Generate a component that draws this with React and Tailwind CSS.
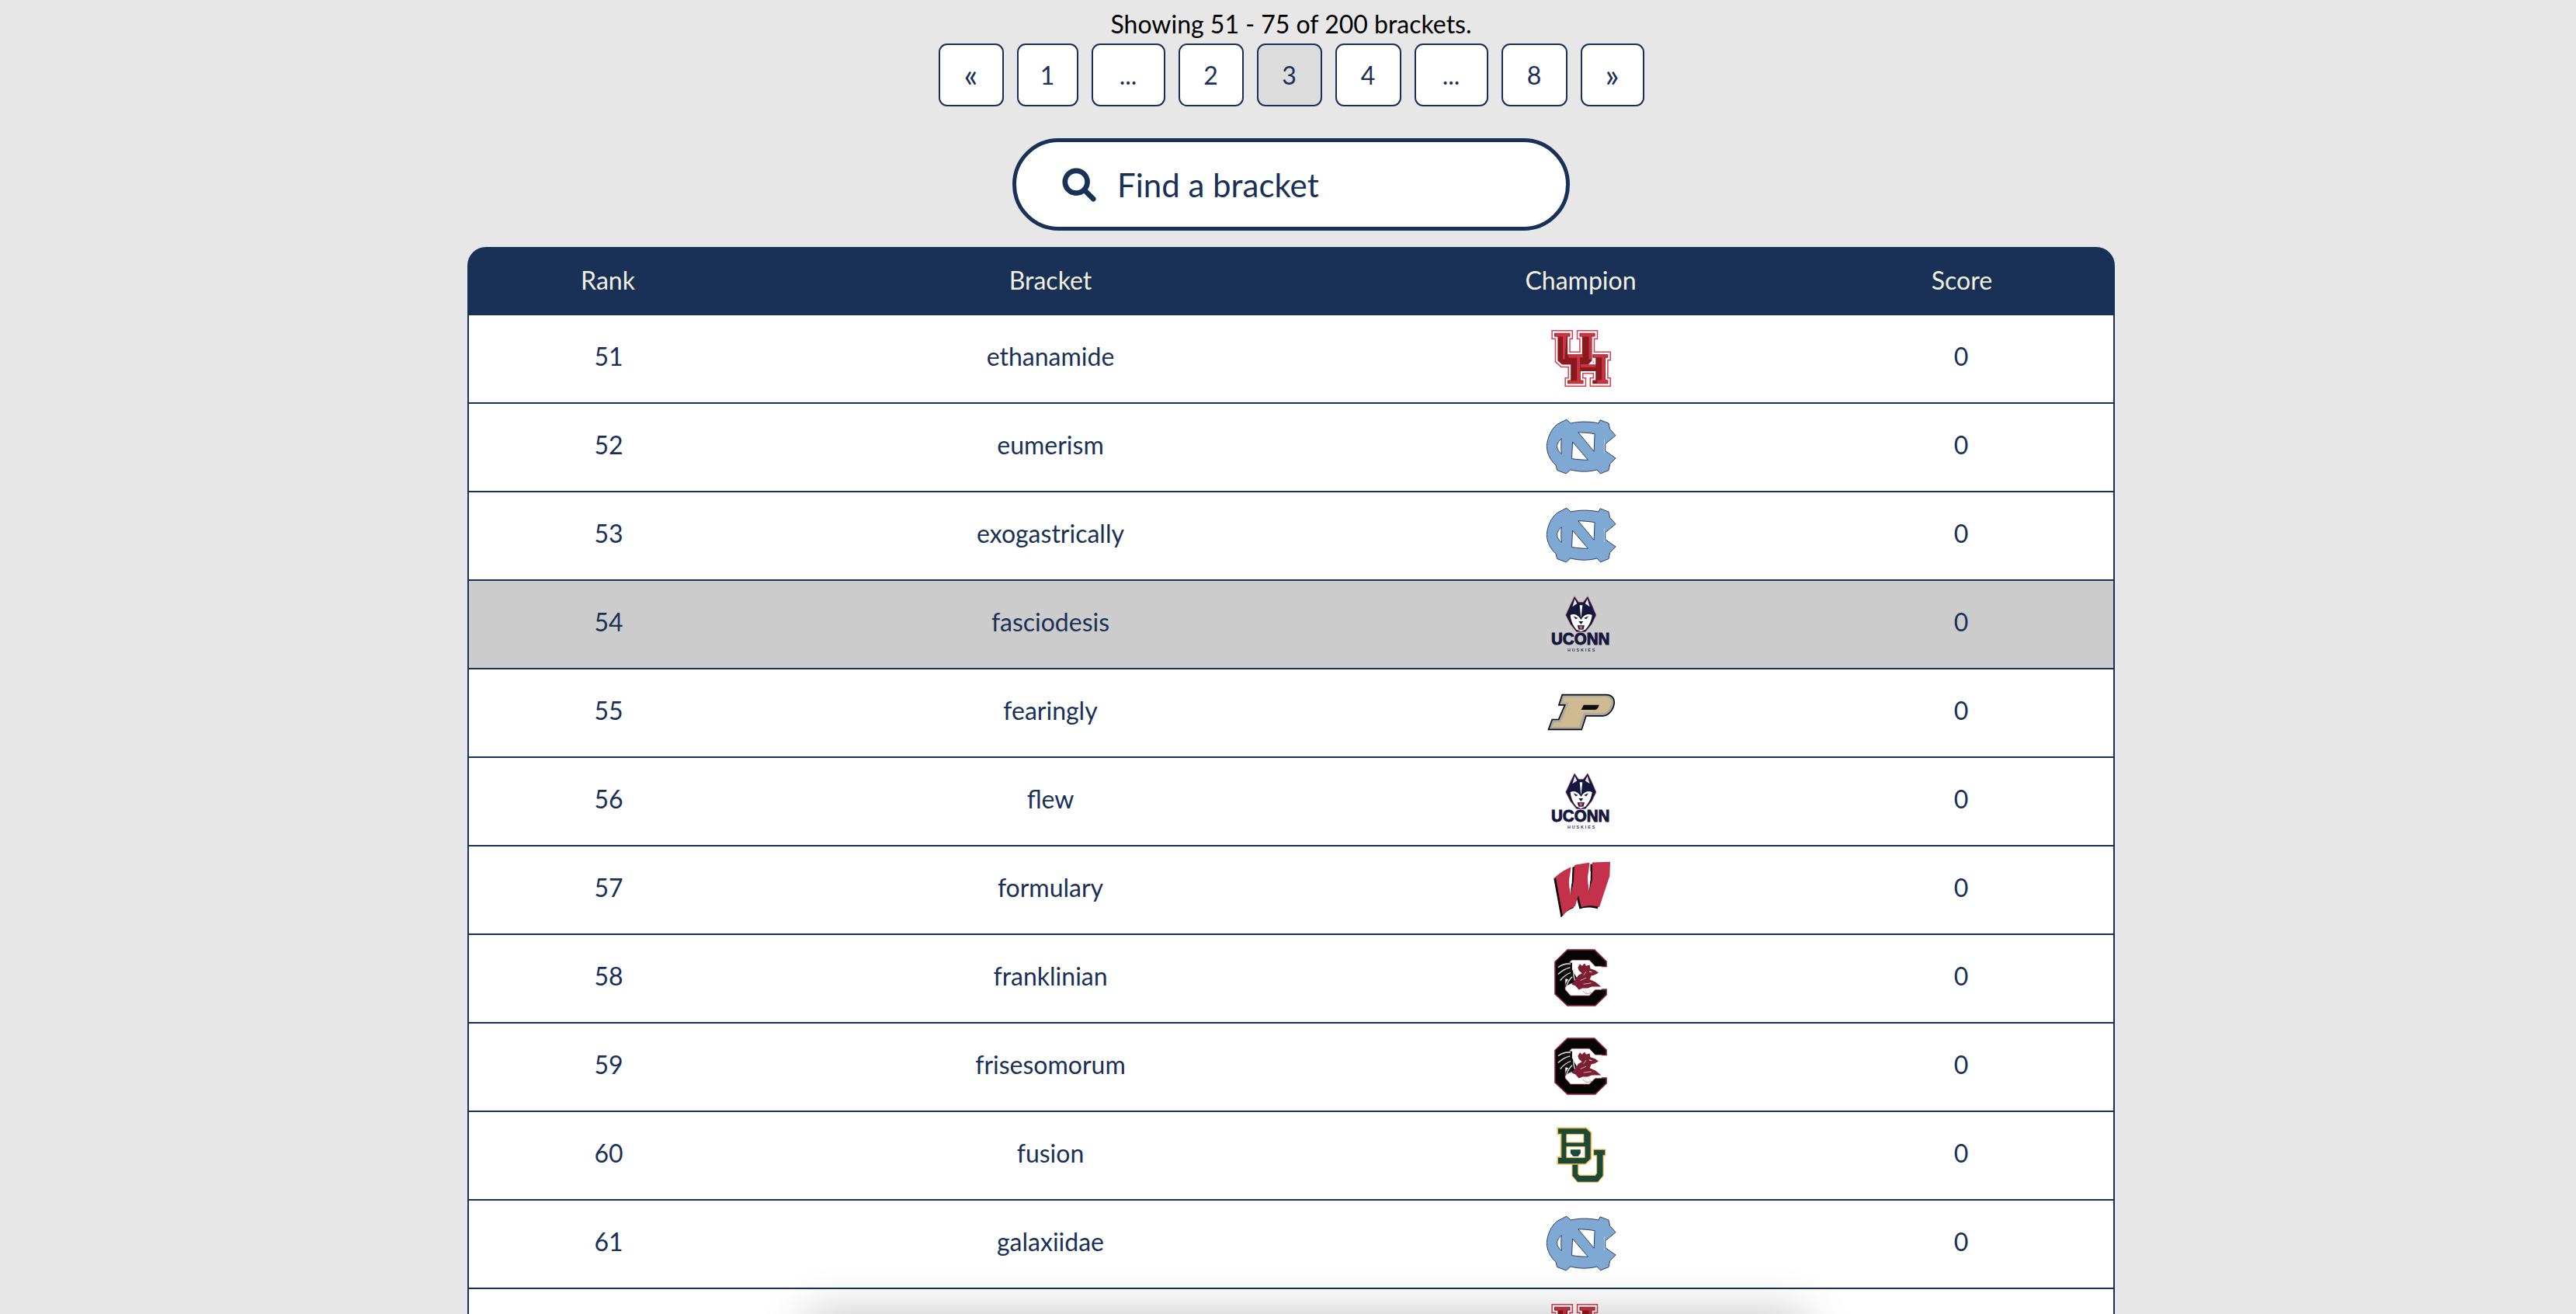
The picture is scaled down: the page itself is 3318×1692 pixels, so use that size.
function UH() {
  const u = "M125 58H186V72H176V150H232V72H222V58H282V72H270V165L255 180H155L138 165V72H125Z";
  const h = "M176 140H237V154H226V180H284V154H272V140H332V154H322V240H332V254H272V240H284V205H226V240H237V254H176V240H188V154H176Z";
  return (
    <svg viewBox="113 47 230 218" className="w-[77px] h-[73px]">
      <path d={u} fill="#d8404f" stroke="#d8404f" strokeWidth="22" strokeLinejoin="miter" />
      <path d={h} fill="#d8404f" stroke="#d8404f" strokeWidth="22" strokeLinejoin="miter" />
      <path d={u} fill="#fff" stroke="#fff" strokeWidth="13" strokeLinejoin="miter" />
      <path d={h} fill="#fff" stroke="#fff" strokeWidth="13" strokeLinejoin="miter" />
      <path d={u} fill="#8a1a1e" />
      <path d={h} fill="#8a1a1e" />
      <path d="M128 60H184V70H172L165 160H158V72H128Z" fill="#cb3443" />
      <path d="M225 60H280V70H268V160H258V72H225Z" fill="#cb3443" />
      <path d="M180 142H235V152H224V250H212V154H180Z" fill="#cb3443" />
      <path d="M275 142H330V152H320V238H330V252H290V240H308V152H275Z" fill="#cb3443" />
      <path d="M226 180H284V190H226Z" fill="#cb3443" />
      <path d="M178 242H235V252H178Z" fill="#cb3443" />
    </svg>
  );
}

function UNC() {
  return (
    <svg viewBox="91 390 274 216" className="w-[91px] h-[72px]">
      <path
        d="M95 497C97 462 112 432 135 412L172 393L187 408C220 400 262 400 296 408L302 395L335 408L340 431L362 455L322 488V515L362 543L340 566L335 590L303 603L290 588C258 597 222 597 187 588L170 603L135 590L130 570C110 552 96 528 95 497Z"
        fill="#7fa9d3"
        stroke="#2e3f63"
        strokeWidth="3"
        strokeLinejoin="round"
      />
      <path d="M152 467C140 478 135 488 135 497C135 508 142 518 152 527C150 506 150 488 152 467Z" fill="#fff" stroke="#2e3f63" strokeWidth="3" />
      <path d="M217 443C240 444 262 445 281 449L278 517Z" fill="#fff" stroke="#2e3f63" strokeWidth="3" strokeLinejoin="round" />
      <path d="M195 480L255 550C235 550 212 548 192 545Z" fill="#fff" stroke="#2e3f63" strokeWidth="3" strokeLinejoin="round" />
      <path d="M318 470V525" stroke="#fff" strokeWidth="2" opacity="0.7" />
    </svg>
  );
}

function UConn() {
  return (
    <svg viewBox="111 22 234 222" className="w-[78px] h-[74px]">
      <path d="M204 27L220 50H238L255 27L271 60L288 100L271 135L246 165H212L188 135L170 100L188 60Z" fill="#15173f" stroke="#d9656f" strokeWidth="2" strokeLinejoin="round" />
      <path d="M205 38L214 56L196 68Z" fill="#e8e6ea" />
      <path d="M254 38L245 56L263 68Z" fill="#e8e6ea" />
      <path d="M188 100C205 92 218 100 229 118C240 100 255 92 272 100C270 122 258 145 246 156L229 163L212 156C200 145 190 122 188 100Z" fill="#fff" />
      <path d="M224 62L229 112L235 62Z" fill="#fff" />
      <path d="M200 104L218 112L208 116Z" fill="#15173f" />
      <path d="M258 104L240 112L250 116Z" fill="#15173f" />
      <path d="M220 124H238L229 136Z" fill="#15173f" />
      <path d="M215 140H243L238 156H220Z" fill="#15173f" />
      <path d="M222 143H236L233 153H225Z" fill="#dc5a6c" />
      <text x="227" y="214" textAnchor="middle" textLength="226" lengthAdjust="spacingAndGlyphs" fontFamily="'Liberation Sans', sans-serif" fontWeight="700" fontSize="64" fill="#15173f" stroke="#15173f" strokeWidth="3">UCONN</text>
      <text x="230" y="240" textAnchor="middle" textLength="106" lengthAdjust="spacing" fontFamily="'Liberation Sans', sans-serif" fontWeight="700" fontSize="16" fill="#2a2c5a">HUSKIES</text>
    </svg>
  );
}

function Purdue() {
  const p = "M158 410H326C346 411 354 424 352 438C349 462 332 482 312 483H244L227 536H108L119 506H144L172 441H148Z";
  return (
    <svg viewBox="91 398 274 150" className="w-[91px] h-[50px]">
      <path d={p} fill="#0d0d0d" stroke="#0d0d0d" strokeWidth="14" strokeLinejoin="miter" />
      <path d={p} fill="#a9a8a2" stroke="#a9a8a2" strokeWidth="4" />
      <path d="M162 414H322C340 415 347 426 345 438C342 458 328 476 310 476H238L220 530H116L124 512H150L180 436H154Z" fill="#cfb991" />
      <path d="M238 445H298C296 455 290 463 282 464H228Z" fill="#0d0d0d" />
    </svg>
  );
}

function Wisconsin() {
  const w = "M130 118C150 100 170 88 190 80L182 140L188 190L200 135L203 73C225 68 245 65 262 63L255 125L260 178L272 125L272 62L342 60L340 115L300 235C275 228 250 228 230 236L218 190L206 232C188 238 172 250 158 270Z";
  return (
    <svg viewBox="113 58 232 216" className="w-[77px] h-[72px]">
      <path d={w} transform="translate(-7 7)" fill="#0b0b0b" />
      <path d={w} fill="#c3314b" />
      <path d="M188 190L182 140L186 105L194 108L192 140Z" fill="#fff" />
      <path d="M260 178L255 125L258 95L266 97L265 125Z" fill="#fff" />
    </svg>
  );
}

function Gamecock() {
  return (
    <svg viewBox="127 399 204 221" className="w-[68px] h-[74px]">
      <path d="M178 402H282L328 447V466H285L262 442H195L170 465V555L190 578H262L285 555H328V575L285 617H178L130 572V448Z" fill="#050505" stroke="#7c1f2e" strokeWidth="5" strokeLinejoin="miter" />
      <path d="M170 465L195 442H262L285 466H310V555H285L262 578H190L170 555Z" fill="#fff" />
      <path d="M196 452C172 448 150 456 136 470C150 468 160 468 170 472C152 476 142 486 136 500C150 492 160 490 170 494C156 504 146 516 146 524C160 514 172 512 182 516C172 526 168 536 170 546C182 534 194 530 204 532L214 510L196 478Z" fill="#111" />
      <path d="M190 456C170 454 154 460 142 470M188 470C172 474 156 482 142 496M190 490C174 496 160 508 150 520M196 506C186 516 178 528 174 542M204 470C200 490 202 510 208 524" stroke="#e9e4e4" strokeWidth="4" fill="none" />
      <path d="M218 470L226 456L234 464L244 454L250 464L264 460L266 474L284 480L298 490L284 498L270 502L264 516L286 526L308 544H272L256 550H236L222 556L208 540L194 536L208 518L220 500L234 492L222 482Z" fill="#7d1f33" />
      <path d="M240 500L250 486M228 520L250 510M240 534L270 530M246 552L252 570M258 552L270 570" stroke="#d9c9cc" strokeWidth="2.5" fill="none" />
      <path d="M262 485L272 488" stroke="#fff" strokeWidth="3" />
      <path d="M236 560L250 572L272 568" stroke="#777" strokeWidth="2" fill="none" />
    </svg>
  );
}

function Baylor() {
  const u = "M195 205V255L215 278H292L312 255V175H320V155H278V175H290V245L283 255H222L215 248V205Z";
  const b = "M137 70H248L267 88V190L245 210H137V183H150V95H137Z";
  return (
    <svg viewBox="131 63 194 222" className="w-[65px] h-[74px]">
      <path d={u} fill="#f2bd55" stroke="#f2bd55" strokeWidth="7" strokeLinejoin="miter" />
      <path d={u} fill="#1c4a36" />
      <path d={b} fill="#1c4a36" stroke="#f2bd55" strokeWidth="5" strokeLinejoin="miter" />
      <path d="M172 95H238V126H172Z" fill="#fff" stroke="#f2bd55" strokeWidth="3" />
      <path d="M172 143H242V185H172Z" fill="#fff" stroke="#f2bd55" strokeWidth="3" />
      <path d="M187 154H226V168L216 180H198L187 168Z" fill="#1c4a36" />
    </svg>
  );
}

const LOGOS = { UH, UNC, UConn, Purdue, Wisconsin, Gamecock, Baylor };

const ROWS = [
  [51, "ethanamide", "UH"],
  [52, "eumerism", "UNC"],
  [53, "exogastrically", "UNC"],
  [54, "fasciodesis", "UConn"],
  [55, "fearingly", "Purdue"],
  [56, "flew", "UConn"],
  [57, "formulary", "Wisconsin"],
  [58, "franklinian", "Gamecock"],
  [59, "frisesomorum", "Gamecock"],
  [60, "fusion", "Baylor"],
  [61, "galaxiidae", "UNC"],
  [62, "", "UH"],
];

const PAGES = [
  ["«", "w-[84px] bg-white text-[42px]"],
  ["1", "w-[79px] bg-white text-[32px]"],
  ["...", "w-[95px] bg-white text-[32px]"],
  ["2", "w-[84px] bg-white text-[32px]"],
  ["3", "w-[84px] bg-[#dcdcdc] text-[32px]"],
  ["4", "w-[85px] bg-white text-[32px]"],
  ["...", "w-[95px] bg-white text-[32px]"],
  ["8", "w-[85px] bg-white text-[32px]"],
  ["»", "w-[82px] bg-white text-[42px]"],
];

export default function App() {
  return (
    <div className="relative h-[1692px] overflow-hidden bg-[#e7e7e7] font-['Lato',sans-serif]">
      <div className="ml-[602px] w-[2122px] flex flex-col items-center">
        <div className="h-[56px] pt-[7px] text-[32px] leading-[48px] text-black">Showing 51 - 75 of 200 brackets.</div>
        <div className="flex gap-[17px]">
          {PAGES.map(([label, cls], i) => (
            <div
              key={i}
              className={`h-[81px] flex items-center justify-center rounded-[11px] border-2 border-[#193157] text-[#193157] ${cls}`}
            >
              {label}
            </div>
          ))}
        </div>
        <div className="mt-[41px] h-[119px] w-[718px] flex items-center rounded-full border-[5px] border-[#193157] bg-white pl-[58px] text-[#193157]">
          <svg viewBox="0 0 48 48" className="w-[46px] h-[48px] shrink-0" fill="none" stroke="#193157">
            <circle cx="20" cy="20" r="15" strokeWidth="7" />
            <path d="M31 31L43 43" strokeWidth="7" strokeLinecap="round" />
          </svg>
          <span className="ml-[26px] text-[42px] leading-none">Find a bracket</span>
        </div>
        <div className="mt-[21px] w-full overflow-hidden rounded-t-[24px]">
          <div className="grid h-[88px] grid-cols-[362px_778px_588px_394px] items-center bg-[#193157] pb-[2px] text-center text-[32px] text-[#f1efe0]">
            <div>Rank</div>
            <div>Bracket</div>
            <div>Champion</div>
            <div>Score</div>
          </div>
          {ROWS.map(([rank, name, logo]) => {
            const Logo = LOGOS[logo];
            const last = rank === 62;
            return (
              <div
                key={rank}
                className={`grid h-[114px] grid-cols-[360px_778px_588px_392px] items-center border-x-2 border-b-2 border-[#193157] pb-[2px] text-center text-[32px] text-[#193157] ${rank === 54 ? "bg-[#cccccc]" : "bg-white"}`}
              >
                <div className="pb-[4px]">{last ? "" : rank}</div>
                <div className="pb-[4px]">{name}</div>
                <div className="flex justify-center">
                  <Logo />
                </div>
                <div className="pb-[4px]">{last ? "" : 0}</div>
              </div>
            );
          })}
        </div>
      </div>
      <div className="absolute left-[1040px] top-[1692px] h-[100px] w-[1285px] shadow-[0_0_60px_rgba(0,0,0,0.24)]" />
    </div>
  );
}
